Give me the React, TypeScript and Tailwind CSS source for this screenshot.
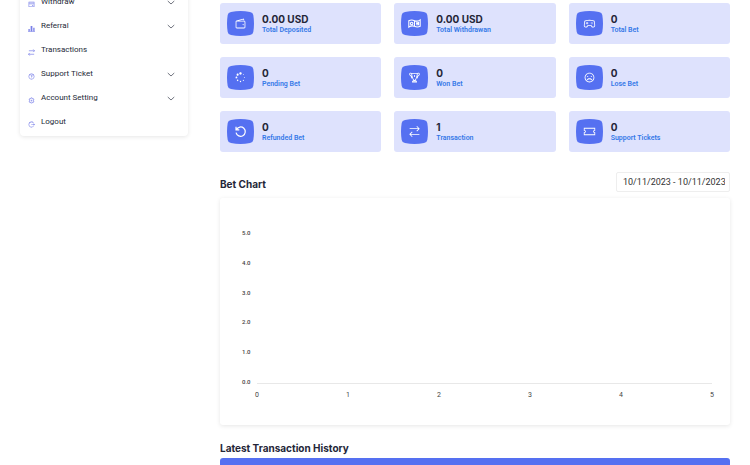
import type { IconType } from 'react-icons';
import {
  RiBankCardLine,
  RiLogoutCircleRLine,
  RiQuestionLine,
  RiSettings3Line,
} from 'react-icons/ri';
import {
  LiaExchangeAltSolid,
  LiaFrown,
  LiaGamepadSolid,
  LiaSpinnerSolid,
  LiaTicketAltSolid,
  LiaTrophySolid,
  LiaWalletSolid,
} from 'react-icons/lia';

interface IconProps {
  className?: string;
}

interface MenuItem {
  label: string;
  icon: IconType | ((props: IconProps) => React.ReactNode);
  expandable?: boolean;
}

interface Stat {
  value: string;
  label: string;
  icon: IconType | ((props: IconProps) => React.ReactNode);
}

const BarsIcon = ({ className }: IconProps) => (
  <svg viewBox="0 0 16 16" fill="currentColor" className={className}>
    <path d="M1 9h3v5H1zM6 2h4v12H6zM12 6h3v8h-3zM0 14h16v1.500H0z" />
  </svg>
);

const SwapIcon = ({ className }: IconProps) => (
  <svg
    viewBox="0 0 16 16"
    fill="none"
    stroke="currentColor"
    strokeWidth="1.6"
    className={className}
  >
    <path d="M2 4h13M12 1l3 3-3 3M14 12H1M4 9l-3 3 3 3" />
  </svg>
);

const NotesIcon = ({ className }: IconProps) => (
  <svg
    viewBox="0 0 32 32"
    fill="none"
    stroke="currentColor"
    strokeWidth="2.6"
    className={className}
  >
    <path d="M2 9Q9 6 16 9T30 7V23Q23 26 16 23T2 25ZM16 9V23" />
    <circle cx="9" cy="16" r="3" />
    <path d="M20 13h6v6h-6M20 16h5" />
  </svg>
);

const UndoIcon = ({ className }: IconProps) => (
  <svg
    viewBox="0 0 32 32"
    fill="none"
    stroke="currentColor"
    strokeWidth="3"
    className={className}
  >
    <path d="M5 4v8h8M6 11A11.500 11.500 0 1 1 5 19" />
  </svg>
);

const CaretIcon = ({ className }: IconProps) => (
  <svg
    viewBox="0 0 16 10"
    fill="none"
    stroke="currentColor"
    strokeWidth="2"
    className={className}
  >
    <path d="M1.500 2L8 8l6.500-6" />
  </svg>
);

const menu: MenuItem[] = [
  { label: 'Withdraw', icon: RiBankCardLine, expandable: true },
  { label: 'Referral', icon: BarsIcon, expandable: true },
  { label: 'Transactions', icon: SwapIcon },
  { label: 'Support Ticket', icon: RiQuestionLine, expandable: true },
  { label: 'Account Setting', icon: RiSettings3Line, expandable: true },
  { label: 'Logout', icon: RiLogoutCircleRLine },
];

const stats: Stat[] = [
  { value: '0.00 USD', label: 'Total Deposited', icon: LiaWalletSolid },
  { value: '0.00 USD', label: 'Total Withdrawan', icon: NotesIcon },
  { value: '0', label: 'Total Bet', icon: LiaGamepadSolid },
  { value: '0', label: 'Pending Bet', icon: LiaSpinnerSolid },
  { value: '0', label: 'Won Bet', icon: LiaTrophySolid },
  { value: '0', label: 'Lose Bet', icon: LiaFrown },
  { value: '0', label: 'Refunded Bet', icon: UndoIcon },
  { value: '1', label: 'Transaction', icon: LiaExchangeAltSolid },
  { value: '0', label: 'Support Tickets', icon: LiaTicketAltSolid },
];

const Sidebar = () => (
  <aside className="-mt-[10px] w-[168px] shrink-0 rounded-sm bg-white px-2 pb-[2px] shadow-[0_1px_4px_rgba(0,0,0,0.1)]">
    <ul>
      {menu.map(({ label, icon: Icon, expandable }) => (
        <li key={label}>
          <a
            href="#"
            className="flex h-6 items-center gap-[6px] text-[8px] leading-3 text-[#252a38]"
          >
            <Icon className="mt-1 size-[7px] text-[#7a80e8]" />
            <span className="grow">{label}</span>
            {expandable && (
              <CaretIcon className="mr-[5px] h-[5px] w-2 text-[#70747f]" />
            )}
          </a>
        </li>
      ))}
    </ul>
  </aside>
);

const StatCard = ({ value, label, icon: Icon }: Stat) => (
  <div className="flex h-[41px] items-center gap-2 rounded-[3px] bg-[#dee2fd] px-[7px]">
    <div className="relative flex h-[25px] w-[27px] items-center justify-center text-white">
      <svg
        viewBox="0 0 27 25"
        className="absolute inset-0 size-full text-[#5570f1]"
      >
        <path
          d="M4 1Q13.500-1 23 1Q26 1.500 26.300 4Q27.700 12.500 26.300 21Q26 23.500 23 24Q13.500 26 4 24Q1 23.500.7 21Q-.7 12.500.7 4Q1 1.500 4 1Z"
          fill="currentColor"
        />
      </svg>
      <Icon className="relative size-[13px] stroke-current" />
    </div>
    <div>
      <p className="font-[Inter] text-[10px] leading-3 font-bold text-[#242638]">
        {value}
      </p>
      <p className="text-[7px] leading-[10px] font-semibold text-[#3478e8]">
        {label}
      </p>
    </div>
  </div>
);

const BetChart = () => {
  const ticks = [0, 1, 2, 3, 4, 5];

  return (
    <div className="rounded-[3px] bg-white pt-[31px] pr-4 pb-[26px] pl-[22px] shadow-[0_1px_4px_rgba(0,0,0,0.1)]">
      <div className="flex text-[6px] leading-2 text-[#444]">
        <div className="flex h-[157px] w-[15px] flex-col justify-between font-medium">
          {[...ticks].reverse().map((tick) => (
            <span key={tick}>{tick.toFixed(1)}</span>
          ))}
        </div>
        <div className="mr-[2px] mb-[2px] grow border-b border-[#e8e8e8]" />
      </div>
      <div className="flex justify-between pt-[5px] pl-[13px] text-[7px] leading-2 text-[#444]">
        {ticks.map((tick) => (
          <span key={tick}>{tick}</span>
        ))}
      </div>
    </div>
  );
};

const App = () => {
  return (
    <div className="h-screen overflow-hidden bg-white font-['Roboto',sans-serif]">
      <div className="flex items-start gap-8 px-5">
        <Sidebar />
        <main className="grow pt-[3px]">
          <div className="grid grid-cols-3 gap-[13px]">
            {stats.map((stat) => (
              <StatCard key={stat.label} {...stat} />
            ))}
          </div>

          <section className="mt-5">
            <div className="mb-[6px] flex items-end justify-between">
              <h2 className="font-[Inter] text-[10px] leading-4 font-bold text-[#242638]">
                Bet Chart
              </h2>
              <input
                type="text"
                aria-label="Date range"
                defaultValue="10/11/2023 - 10/11/2023"
                className="h-5 w-[114px] rounded-[2px] border border-[#eeeeee] pr-1 pl-[6px] text-[9px] text-[#333]"
              />
            </div>
            <BetChart />
          </section>

          <section className="mt-[15px]">
            <h2 className="mb-[2px] font-[Inter] text-[10px] leading-4 font-bold text-[#242638]">
              Latest Transaction History
            </h2>
            <div className="h-10 rounded-t-[3px] bg-[#5570f1]" />
          </section>
        </main>
      </div>
    </div>
  );
};

export default App;
